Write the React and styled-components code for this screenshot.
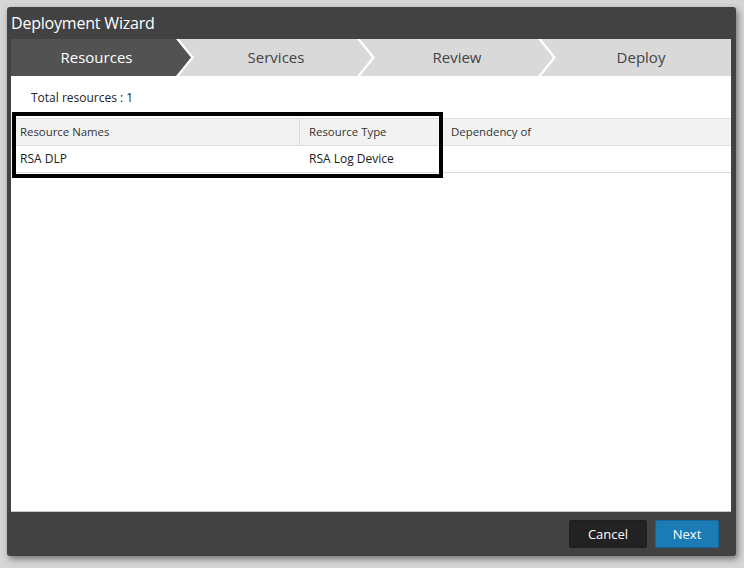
import React from 'react';
import styled, { createGlobalStyle } from 'styled-components';

const GlobalStyle = createGlobalStyle`
  html, body {
    margin: 0;
    padding: 0;
    background: #d5d5d5;
    font-family: "Open Sans", "Noto Sans", sans-serif;
  }
`;

const Page = styled.div`
  width: 744px;
  height: 568px;
  padding: 7px 8px 12px 7px;
  box-sizing: border-box;
`;

const Dialog = styled.div`
  width: 729px;
  height: 549px;
  background: #424242;
  border-radius: 3px;
  box-shadow: 2px 3px 6px rgba(0, 0, 0, 0.45);
  display: flex;
  flex-direction: column;
  padding: 0 5px 0 4px;
  box-sizing: border-box;
`;

const Title = styled.div`
  height: 32px;
  color: #fff;
  font-size: 16px;
  line-height: 32px;
  letter-spacing: -0.2px;
`;

const Body = styled.div`
  flex: 1;
  background: #fff;
  display: flex;
  flex-direction: column;
  border-bottom: 1px solid #c8c8c8;
  position: relative;
`;

const Steps = styled.div`
  display: flex;
  height: 37px;
  background: #fff;
`;

const Step = styled.div`
  box-sizing: border-box;
  flex: 0 0 ${p => (p.$first ? '180px' : p.$last ? '190px' : '193px')};
  background: ${p => (p.$active ? '#525252' : '#d9d9d9')};
  color: ${p => (p.$active ? '#fff' : '#444')};
  font-size: 15px;
  display: flex;
  align-items: center;
  justify-content: center;
  padding-bottom: 2px;
  padding-left: ${p => (p.$first ? '0' : '10px')};
  padding-right: ${p => (p.$last ? '0' : '9px')};
  margin-left: ${p => (p.$first ? '0' : '-12px')};
  clip-path: ${p =>
    p.$last
      ? 'polygon(0 0, 100% 0, 100% 100%, 0 100%, 15px 50%)'
      : p.$first
      ? 'polygon(0 0, calc(100% - 15px) 0, 100% 50%, calc(100% - 15px) 100%, 0 100%)'
      : 'polygon(0 0, calc(100% - 15px) 0, 100% 50%, calc(100% - 15px) 100%, 0 100%, 15px 50%)'};
`;

const Total = styled.div`
  font-size: 12px;
  color: #222;
  padding: 13px 0 0 20px;
  height: 29px;
  box-sizing: border-box;
`;

const Table = styled.div`
  display: grid;
  grid-template-columns: 289px 142px 1fr;
  margin-top: 13px;
  color: #333;
`;

const HeadCell = styled.div`
  background: #f2f2f2;
  height: 28px;
  display: flex;
  align-items: center;
  padding: 0 0 2px 9px;
  font-size: 11.4px;
  border-top: 1px solid #dcdcdc;
  border-bottom: 1px solid #dcdcdc;
  border-right: ${p => (p.$divider ? '1px solid #dcdcdc' : 'none')};
  box-sizing: border-box;
`;

const Cell = styled.div`
  height: 27px;
  display: flex;
  align-items: center;
  padding: 0 0 2px 9px;
  font-size: 12px;
  color: #222;
  border-bottom: 1px solid #dcdcdc;
  box-sizing: border-box;
`;

const Highlight = styled.div`
  position: absolute;
  left: 1px;
  top: 73px;
  width: 431px;
  height: 66px;
  border: 4px solid #000;
  box-sizing: border-box;
  pointer-events: none;
`;

const Footer = styled.div`
  height: 43px;
  display: flex;
  align-items: center;
  justify-content: flex-end;
  gap: 8px;
  padding-right: 12px;
  padding-bottom: 1px;
`;

const Button = styled.button`
  height: 28px;
  width: ${p => (p.$primary ? '64px' : '78px')};
  border: 1px solid ${p => (p.$primary ? '#1468a0' : '#1e1e1e')};
  background: ${p => (p.$primary ? '#1a7bb5' : '#222')};
  color: #fff;
  font-family: "Open Sans", "Noto Sans", sans-serif;
  font-size: 13px;
  border-radius: 2px;
  padding: 0;
`;

const steps = ['Resources', 'Services', 'Review', 'Deploy'];

export default function App() {
  return (
    <>
      <GlobalStyle />
      <Page>
        <Dialog>
          <Title>Deployment Wizard</Title>
          <Body>
            <Steps>
              {steps.map((s, i) => (
                <Step key={s} $active={i === 0} $first={i === 0} $last={i === steps.length - 1}>
                  {s}
                </Step>
              ))}
            </Steps>
            <Total>Total resources : 1</Total>
            <Table>
              <HeadCell $divider>Resource Names</HeadCell>
              <HeadCell>Resource Type</HeadCell>
              <HeadCell>Dependency of</HeadCell>
              <Cell>RSA DLP</Cell>
              <Cell>RSA Log Device</Cell>
              <Cell />
            </Table>
            <Highlight />
          </Body>
          <Footer>
            <Button>Cancel</Button>
            <Button $primary>Next</Button>
          </Footer>
        </Dialog>
      </Page>
    </>
  );
}
